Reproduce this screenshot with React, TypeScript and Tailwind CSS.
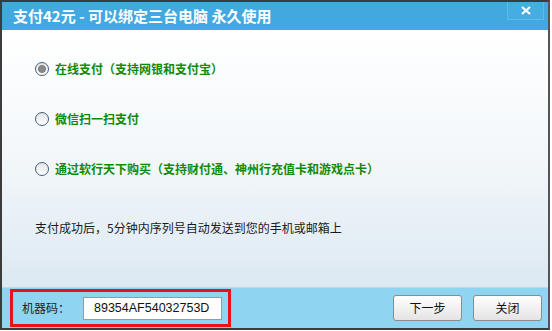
import { useState } from 'react';

const options = [
  '在线支付（支持网银和支付宝）',
  '微信扫一扫支付',
  '通过软行天下购买（支持财付通、神州行充值卡和游戏点卡）',
];

const Radio = ({ checked }: { checked: boolean }) => (
  <span className="w-[14px] h-[14px] rounded-full border-[1.5px] border-[#3f5f7c] bg-gradient-to-b from-[#e4e4e4] to-white flex items-center justify-center shrink-0">
    {checked && <span className="w-[8px] h-[8px] rounded-full bg-[#8a8a8a] border border-[#777]" />}
  </span>
);

export default function App() {
  const [selected, setSelected] = useState(0);

  return (
    <div
      className="w-[552px] h-[331px] bg-white flex flex-col"
      style={{ fontFamily: '"Noto Sans CJK SC", "Liberation Sans", sans-serif' }}
    >
      <div className="w-[550px] h-[330px] border-2 border-[#3c3c3c] border-r-[#555] flex flex-col bg-white">
        {/* title bar */}
        <div className="h-[28px] bg-[#41a9e0] flex items-start justify-between">
          <span className="text-white text-[15px] font-bold leading-[27px] pl-[11px] whitespace-nowrap">
            支付42元 - 可以绑定三台电脑 永久使用
          </span>
          <button className="w-[37px] h-[18px] mr-[4px] border-l border-r border-b border-[#62b9e8] bg-[#46ade3] text-white flex items-center justify-center">
            <svg width="10" height="9" viewBox="0 0 10 9">
              <path d="M1 1 L9 8 M9 1 L1 8" stroke="white" strokeWidth="2.2" />
            </svg>
          </button>
        </div>

        {/* body */}
        <div className="flex-1 bg-gradient-to-b from-white via-[#f3f7fa] to-[#dce9f2] flex flex-col pl-[33px] pt-[32px] border-b border-[#c7d6e0]">
          {options.map((label, i) => (
            <div
              key={label}
              onClick={() => setSelected(i)}
              className="flex items-center gap-[6px] h-[14px] mb-[36px] cursor-pointer"
            >
              <Radio checked={selected === i} />
              <span className="text-[12px] font-bold text-[#118a0a] leading-none whitespace-nowrap">{label}</span>
            </div>
          ))}
          <p className="text-[12px] text-[#1a1a1a] mt-[10px] leading-none whitespace-nowrap">
            支付成功后，5分钟内序列号自动发送到您的手机或邮箱上
          </p>
        </div>

        {/* footer */}
        <div className="h-[40px] bg-[#8fd5f2] flex items-center justify-between pr-[6px]">
          <div className="ml-[8px] w-[221px] h-[38px] border-[3px] border-[#e8121a] flex items-center pl-[9px] gap-[13px]">
            <span className="text-[12px] text-[#222] whitespace-nowrap shrink-0">机器码：</span>
            <div
              className="w-[139px] h-[23px] bg-white border border-[#9a9a9a] flex items-center pl-[10px] text-[12.5px] text-[#111] shrink-0"
              style={{ fontFamily: '"Liberation Sans", sans-serif' }}
            >
              89354AF54032753D
            </div>
          </div>
          <div className="flex gap-[11px]">
            <button className="w-[69px] h-[26px] rounded-[3px] border border-[#8c8c8c] bg-gradient-to-b from-white to-[#e4e4e4] text-[12px] text-[#111]">
              下一步
            </button>
            <button className="w-[69px] h-[26px] rounded-[3px] border border-[#8c8c8c] bg-gradient-to-b from-white to-[#e4e4e4] text-[12px] text-[#111]">
              关闭
            </button>
          </div>
        </div>
      </div>
    </div>
  );
}
